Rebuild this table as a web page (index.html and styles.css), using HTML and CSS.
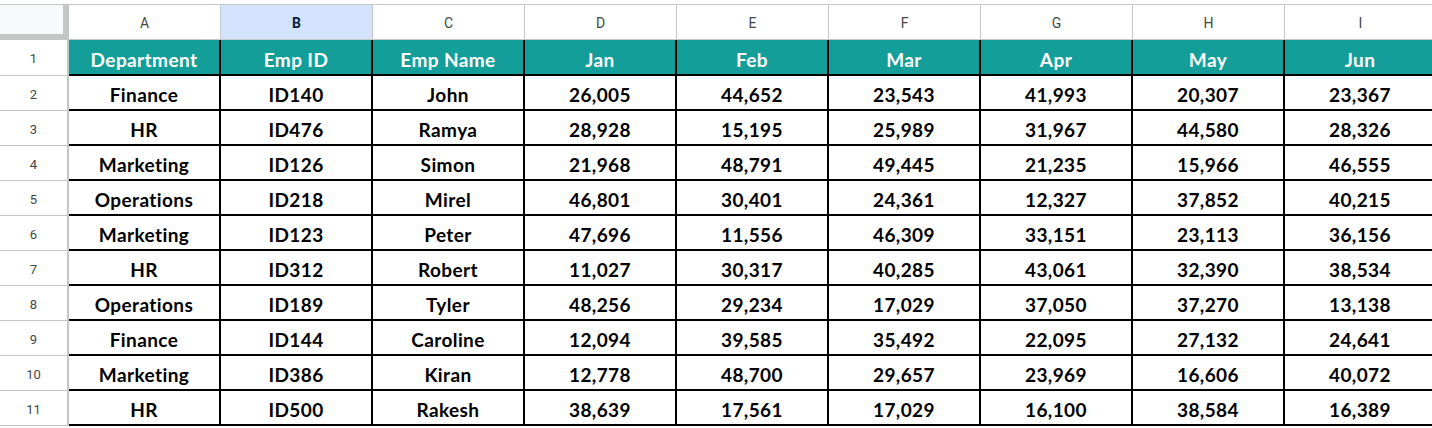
FILE: index.html
```html
<!DOCTYPE html>
<html>
<head>
<meta charset="utf-8">
<link rel="stylesheet" href="styles.css">
</head>
<body>
<div class="sheet">
  <div class="corner"></div>
  <div class="colhead">A</div>
  <div class="colhead sel">B</div>
  <div class="colhead">C</div>
  <div class="colhead">D</div>
  <div class="colhead">E</div>
  <div class="colhead">F</div>
  <div class="colhead">G</div>
  <div class="colhead">H</div>
  <div class="colhead">I</div>

  <div class="rownum">1</div>
  <div class="cell hd">Department</div><div class="cell hd">Emp ID</div><div class="cell hd">Emp Name</div><div class="cell hd">Jan</div><div class="cell hd">Feb</div><div class="cell hd">Mar</div><div class="cell hd">Apr</div><div class="cell hd">May</div><div class="cell hd">Jun</div>

  <div class="rownum">2</div>
  <div class="cell">Finance</div><div class="cell">ID140</div><div class="cell">John</div><div class="cell">26,005</div><div class="cell">44,652</div><div class="cell">23,543</div><div class="cell">41,993</div><div class="cell">20,307</div><div class="cell">23,367</div>

  <div class="rownum">3</div>
  <div class="cell">HR</div><div class="cell">ID476</div><div class="cell">Ramya</div><div class="cell">28,928</div><div class="cell">15,195</div><div class="cell">25,989</div><div class="cell">31,967</div><div class="cell">44,580</div><div class="cell">28,326</div>

  <div class="rownum">4</div>
  <div class="cell">Marketing</div><div class="cell">ID126</div><div class="cell">Simon</div><div class="cell">21,968</div><div class="cell">48,791</div><div class="cell">49,445</div><div class="cell">21,235</div><div class="cell">15,966</div><div class="cell">46,555</div>

  <div class="rownum">5</div>
  <div class="cell">Operations</div><div class="cell">ID218</div><div class="cell">Mirel</div><div class="cell">46,801</div><div class="cell">30,401</div><div class="cell">24,361</div><div class="cell">12,327</div><div class="cell">37,852</div><div class="cell">40,215</div>

  <div class="rownum">6</div>
  <div class="cell">Marketing</div><div class="cell">ID123</div><div class="cell">Peter</div><div class="cell">47,696</div><div class="cell">11,556</div><div class="cell">46,309</div><div class="cell">33,151</div><div class="cell">23,113</div><div class="cell">36,156</div>

  <div class="rownum">7</div>
  <div class="cell">HR</div><div class="cell">ID312</div><div class="cell">Robert</div><div class="cell">11,027</div><div class="cell">30,317</div><div class="cell">40,285</div><div class="cell">43,061</div><div class="cell">32,390</div><div class="cell">38,534</div>

  <div class="rownum">8</div>
  <div class="cell">Operations</div><div class="cell">ID189</div><div class="cell">Tyler</div><div class="cell">48,256</div><div class="cell">29,234</div><div class="cell">17,029</div><div class="cell">37,050</div><div class="cell">37,270</div><div class="cell">13,138</div>

  <div class="rownum">9</div>
  <div class="cell">Finance</div><div class="cell">ID144</div><div class="cell">Caroline</div><div class="cell">12,094</div><div class="cell">39,585</div><div class="cell">35,492</div><div class="cell">22,095</div><div class="cell">27,132</div><div class="cell">24,641</div>

  <div class="rownum">10</div>
  <div class="cell">Marketing</div><div class="cell">ID386</div><div class="cell">Kiran</div><div class="cell">12,778</div><div class="cell">48,700</div><div class="cell">29,657</div><div class="cell">23,969</div><div class="cell">16,606</div><div class="cell">40,072</div>

  <div class="rownum">11</div>
  <div class="cell">HR</div><div class="cell">ID500</div><div class="cell">Rakesh</div><div class="cell">38,639</div><div class="cell">17,561</div><div class="cell">17,029</div><div class="cell">16,100</div><div class="cell">38,584</div><div class="cell">16,389</div>
</div>
</body>
</html>
```

FILE: styles.css
```css
html, body {
  margin: 0;
  padding: 0;
  background: #ffffff;
  overflow: hidden;
}

.sheet {
  display: grid;
  grid-template-columns: 69px repeat(9, 152px);
  grid-template-rows: 35px 36px repeat(10, 35px);
  margin-top: 4px;
  border-top: 1px solid #c4c7c5;
  width: max-content;
}

.corner {
  box-sizing: border-box;
  background: #f8f9fa;
  border-right: 6px solid #c4c7c5;
  border-bottom: 6px solid #c4c7c5;
}

.colhead {
  box-sizing: border-box;
  border-right: 1px solid #c4c7c5;
  border-bottom: 1px solid #c4c7c5;
  display: flex;
  align-items: center;
  justify-content: center;
  font-family: Roboto, "Liberation Sans", sans-serif;
  font-size: 14px;
  color: #444746;
  padding-top: 1px;
}

.colhead.sel {
  background: #d3e3fd;
  color: #0b1f3f;
  font-weight: 700;
}

.rownum {
  box-sizing: border-box;
  border-right: 2px solid #c4c7c5;
  border-bottom: 1px solid #c4c7c5;
  display: flex;
  align-items: center;
  justify-content: center;
  font-family: Roboto, "Liberation Sans", sans-serif;
  font-size: 13px;
  color: #444746;
  padding-top: 2px;
}

.cell {
  box-sizing: border-box;
  border-right: 2px solid #000000;
  border-bottom: 2px solid #000000;
  display: flex;
  align-items: flex-end;
  justify-content: center;
  font-family: Lato, "Liberation Sans", sans-serif;
  font-weight: 700;
  font-size: 19px;
  letter-spacing: 0.4px;
  line-height: 22px;
  padding-bottom: 3px;
  color: #000000;
  white-space: nowrap;
}

.cell.hd {
  background: #139e9a;
  color: #ffffff;
}
```
